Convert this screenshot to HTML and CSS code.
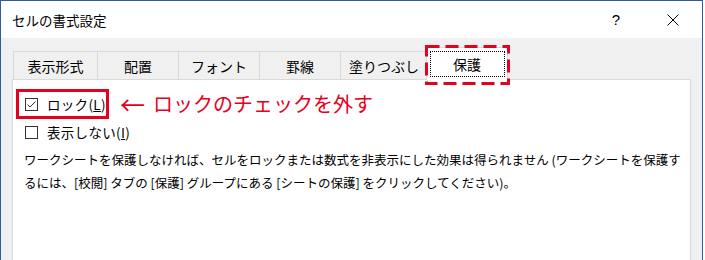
FILE: index.html
```html
<!DOCTYPE html>
<html lang="ja">
<head>
    <meta charset="UTF-8">
    <meta name="viewport" content="width=device-width, initial-scale=1.0">
    <title>セルの書式設定</title>
    <link rel="stylesheet" href="styles.css">
</head>
<body>
    <div class="window">
        <div class="titlebar">
            <span class="title">セルの書式設定</span>
            <span class="help">?</span>
            <span class="close">
                <svg width="12" height="12" viewBox="0 0 12 12"><path d="M0.5 0.5 L11.5 11.5 M11.5 0.5 L0.5 11.5" stroke="#000" stroke-width="1" fill="none"/></svg>
            </span>
        </div>

        <div class="content">
            <div class="tabs">
                <div class="tab first">表示形式</div>
                <div class="tab">配置</div>
                <div class="tab">フォント</div>
                <div class="tab">罫線</div>
                <div class="tab wide">塗りつぶし</div>
                <div class="tab active">
                    <span class="focus">保護</span>
                    <svg class="dash-mark" width="85" height="40" viewBox="0 0 85 40"><rect x="1.5" y="1.5" width="82" height="37" fill="none" stroke="#e60020" stroke-width="3" stroke-dasharray="13 6"/></svg>
                </div>
            </div>

            <div class="panel">
                <div class="row">
                    <label class="check red-box">
                        <span class="box">
                            <svg width="11" height="11" viewBox="0 0 11 11"><path d="M1.5 5.5 L4 8 L9.5 2.5" stroke="#333" stroke-width="1" fill="none"/></svg>
                        </span>
                        <span class="label">ロック(<u>L</u>)</span>
                    </label>
                    <span class="note"><span class="arrow">←</span>ロックのチェックを外す</span>
                </div>
                <label class="check second">
                    <span class="box"></span>
                    <span class="label">表示しない(<u>I</u>)</span>
                </label>
                <p class="desc">ワークシートを保護しなければ、セルをロックまたは数式を非表示にした効果は得られません (ワークシートを保護す<br>るには、[校閲] タブの [保護] グループにある [シートの保護] をクリックしてください)。</p>
            </div>
        </div>
    </div>
</body>
</html>
```

FILE: styles.css
```css
body {
    margin: 0;
    background: #fff;
    font-family: "Noto Sans CJK JP", "Noto Sans", sans-serif;
    color: #000;
}
.window {
    width: 701px;
    height: 259px;
    border: 1px solid #2f5aa8;
    border-bottom: none;
    background: #f0f0f0;
    overflow: hidden;
}
.titlebar {
    height: 37px;
    background: #fff;
    display: flex;
    align-items: center;
}
.title {
    padding-left: 11px;
    font-size: 13.5px;
    flex: 1;
}
.help {
    width: 24px;
    text-align: center;
    font-family: "Liberation Sans", sans-serif;
    font-size: 15px;
}
.close {
    width: 46px;
    margin: 0 6px 0 22px;
    display: flex;
    justify-content: center;
}
.content {
    padding: 9px 11px 0;
}
.tabs {
    display: flex;
    align-items: flex-end;
    height: 32px;
    padding-left: 1px;
}
.tab {
    box-sizing: border-box;
    width: 81px;
    height: 28px;
    border-top: 1px solid #d9d9d9;
    border-right: 1px solid #d9d9d9;
    display: flex;
    align-items: center;
    justify-content: center;
    font-size: 14px;
}
.tab.first {
    width: 85px;
    border-left: 1px solid #d9d9d9;
}
.tab.wide {
    width: 87px;
}
.tab.active {
    width: 82px;
    height: 33px;
    margin-left: -2px;
    margin-bottom: -1px;
    background: #fff;
    border: 1px solid #d9d9d9;
    border-bottom: none;
    align-items: flex-start;
    position: relative;
    z-index: 1;
}
.focus {
    box-sizing: border-box;
    width: 75px;
    height: 26px;
    margin-top: 3px;
    border: 1px dotted #000;
    display: flex;
    align-items: center;
    justify-content: center;
}
.dash-mark {
    position: absolute;
    top: -3px;
    left: -2px;
}
.panel {
    height: 181px;
    box-sizing: border-box;
    background: #fff;
    border: 1px solid #d9d9d9;
    border-bottom: none;
    padding: 9px 0 0 3px;
}
.row {
    display: flex;
    align-items: center;
}
.check {
    display: flex;
    align-items: center;
    gap: 9px;
    font-size: 13.5px;
    height: 20px;
}
.label {
    white-space: nowrap;
    letter-spacing: 0.3px;
}
.box {
    box-sizing: border-box;
    width: 13px;
    height: 13px;
    border: 1px solid #333;
    background: #fff;
    display: flex;
}
.red-box {
    box-sizing: border-box;
    width: 93px;
    height: 30px;
    border: 3px solid #e60020;
    padding-left: 6px;
}
.second {
    margin: 3px 0 0 9px;
}
.note {
    margin-left: 11px;
    color: #e60020;
    font-size: 20px;
    line-height: 30px;
    display: flex;
    align-items: center;
}
.arrow {
    font-size: 25px;
    margin-right: 8px;
}
.desc {
    margin: 6px 0 0 8px;
    font-size: 12.5px;
    line-height: 23px;
}
```
